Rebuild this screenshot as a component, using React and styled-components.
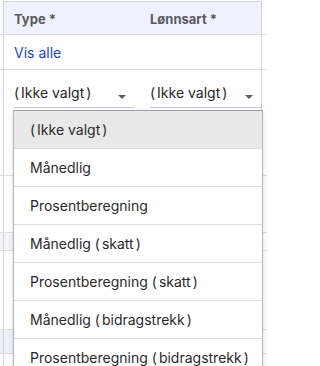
import React from "react";
import styled, { createGlobalStyle } from "styled-components";

const Global = createGlobalStyle`
  html, body { margin: 0; padding: 0; background: #fff; overflow: hidden; }
  body { font-family: Inter, "Noto Sans", sans-serif; }
  #root { width: 267px; height: 366px; overflow: hidden; }
`;

const Page = styled.div`
  position: relative;
  width: 267px;
  height: 366px;
  padding-top: 1px;
  box-sizing: border-box;
`;

const Row = styled.div`
  display: grid;
  grid-template-columns: 3px 259px 1fr;
  height: ${(p) => p.$h}px;
  border-bottom: 1px solid #dcdcdc;
  box-sizing: content-box;
`;

const Side = styled.div`
  background: ${(p) => p.$bg || "transparent"};
`;

const Cells = styled.div`
  display: grid;
  grid-template-columns: 136px 1fr;
  border-left: 1px solid #d4d4d8;
  border-right: 1px solid #d4d4d8;
  border-top: ${(p) => (p.$top ? "1px solid #d4d4d8" : "none")};
  background: ${(p) => p.$bg || "#fff"};
  align-items: ${(p) => p.$align || "center"};
  box-sizing: border-box;
  min-width: 0;
`;

const Cell = styled.div`
  padding-left: 10px;
  min-width: 0;
`;

const HeadText = styled.span`
  font-size: 13px;
  font-weight: 700;
  color: #5a5a5e;
`;

const Link = styled.a`
  font-size: 14px;
  color: #1747d0;
  text-decoration: none;
`;

const Select = styled.div`
  display: flex;
  justify-content: space-between;
  width: ${(p) => p.$w}px;
  height: 30px;
  margin-top: 8px;
  border-bottom: 1px solid #c9c9cc;
  box-sizing: border-box;
`;

const SelectText = styled.span`
  font-size: 14px;
  color: #262626;
  line-height: 30px;
  white-space: pre;
`;

const Paren = styled.span`
  margin-left: ${(p) => (p.$close ? "2px" : "0")};
  margin-right: ${(p) => (p.$close ? "0" : "2px")};
`;

const Caret = styled.span`
  align-self: flex-end;
  margin: 0 8px 8px 0;
  width: 0;
  height: 0;
  border-left: 4.5px solid transparent;
  border-right: 4.5px solid transparent;
  border-top: 4px solid #5c5c5c;
`;

const Menu = styled.ul`
  position: absolute;
  left: 13px;
  top: 110px;
  width: 250px;
  margin: 0;
  padding: 0;
  list-style: none;
  background: #fff;
  border: 1px solid #b3b3bd;
  border-top-color: #9e9eaa;
  box-sizing: border-box;
  box-shadow: 0 2px 6px rgba(0, 0, 0, 0.12);
`;

const Item = styled.li`
  height: 38px;
  display: flex;
  align-items: center;
  padding-left: 16px;
  font-size: 14px;
  color: #2a2a2a;
  background: ${(p) => (p.$active ? "#e9e9ea" : "#fff")};
  border-bottom: 1px solid #dedee0;
  box-sizing: border-box;
  white-space: pre;
`;

function Label({ text }) {
  const parts = text.split(/([()])/);
  return (
    <span>
      {parts.map((p, i) =>
        p === "(" || p === ")" ? (
          <Paren key={i} $close={p === ")"}>
            {p}
          </Paren>
        ) : (
          <React.Fragment key={i}>{p}</React.Fragment>
        )
      )}
    </span>
  );
}

const options = [
  "(Ikke valgt)",
  "Månedlig",
  "Prosentberegning",
  "Månedlig (skatt)",
  "Prosentberegning (skatt)",
  "Månedlig (bidragstrekk)",
  "Prosentberegning (bidragstrekk)",
];

export default function App() {
  return (
    <>
      <Global />
      <Page>
        <Row $h={33}>
          <Side />
          <Cells $top $bg="#eff2fc">
            <Cell>
              <HeadText>Type *</HeadText>
            </Cell>
            <Cell>
              <HeadText>Lønnsart *</HeadText>
            </Cell>
          </Cells>
          <Side />
        </Row>
        <Row $h={34}>
          <Side />
          <Cells>
            <Cell>
              <Link href="#">Vis alle</Link>
            </Cell>
            <Cell />
          </Cells>
          <Side />
        </Row>
        <Row $h={105}>
          <Side />
          <Cells $align="start">
            <Cell>
              <Select $w={120}>
                <SelectText>
                  <Label text="(Ikke valgt)" />
                </SelectText>
                <Caret />
              </Select>
            </Cell>
            <Cell>
              <Select $w={111}>
                <SelectText>
                  <Label text="(Ikke valgt)" />
                </SelectText>
                <Caret />
              </Select>
            </Cell>
          </Cells>
          <Side />
        </Row>
        <Row $h={56}>
          <Side />
          <Cells />
          <Side />
        </Row>
        <Row $h={17}>
          <Side $bg="#f4f5f8" />
          <Cells $bg="#f4f5f8" />
          <Side />
        </Row>
        <Row $h={78}>
          <Side />
          <Cells />
          <Side />
        </Row>
        <Row $h={23}>
          <Side $bg="#eef1fc" />
          <Cells $bg="#eef1fc" />
          <Side />
        </Row>
        <Row $h={30}>
          <Side />
          <Cells />
          <Side />
        </Row>
        <Menu>
          {options.map((o, i) => (
            <Item key={o} $active={i === 0}>
              <Label text={o} />
            </Item>
          ))}
        </Menu>
      </Page>
    </>
  );
}
